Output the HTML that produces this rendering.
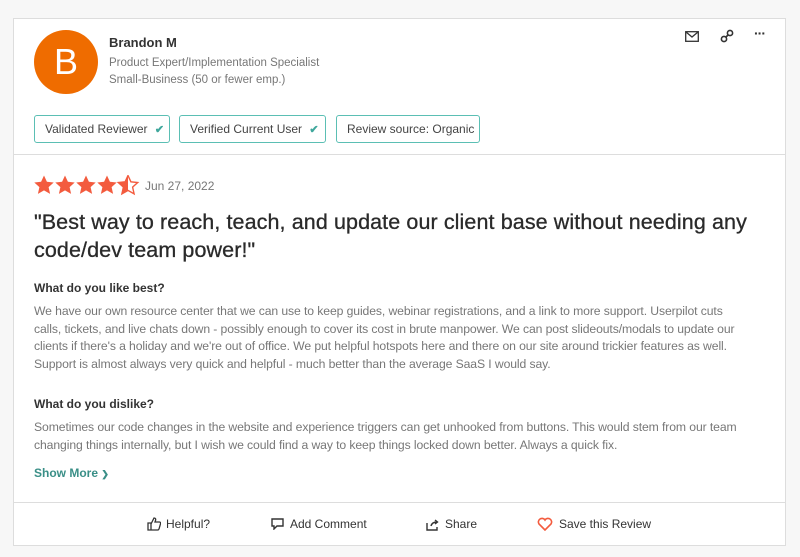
<!DOCTYPE html>
<html><head><style>
body{margin:0;background:#f7f7f7;font-family:"Liberation Sans",sans-serif;width:800px;height:557px;overflow:hidden;position:relative}
.card{position:absolute;left:13px;top:18px;width:773px;height:528px;background:#fff;border:1px solid #ddd;box-sizing:border-box}
.a{position:absolute;white-space:nowrap}
.av{left:20px;top:11px;width:64px;height:64px;border-radius:50%;background:#ef6c00;color:#fff;font-size:36px;text-align:center;line-height:64px}
.badge{position:absolute;top:96px;height:28px;border:1px solid #5bbfb4;border-radius:3px;box-sizing:border-box;font-size:12px;color:#444;line-height:26px;padding-left:10px}
.ck{color:#3fa79c;font-weight:bold;font-size:11px;margin-left:4px}
.hr{position:absolute;left:0;right:0;height:1px;background:#ddd}
.body{font-size:12.2px;color:#777;line-height:17.7px;left:20px;letter-spacing:-0.1px}
.h{font-size:12px;color:#333;font-weight:bold;left:20px}
.ft{font-size:12px;color:#333;top:498px}
</style></head><body>
<div class="card">
<div class="a av">B</div>
<div class="a" style="left:95px;top:16px;font-size:13px;color:#333;font-weight:bold">Brandon M</div>
<div class="a" style="left:95px;top:38px;font-size:11.5px;color:#777">Product Expert/Implementation Specialist</div>
<div class="a" style="left:95px;top:55px;font-size:11.5px;color:#777">Small-Business (50 or fewer emp.)</div>
<svg class="a" style="left:671px;top:12px" width="14" height="11" viewBox="0 0 14 11"><rect x="0.7" y="0.7" width="12.6" height="9.6" fill="none" stroke="#333" stroke-width="1.3"/><path d="M1 1l6 5 6-5" fill="none" stroke="#333" stroke-width="1.3"/></svg>
<svg class="a" style="left:706px;top:10px" width="14" height="14" viewBox="0 0 14 14"><circle cx="4" cy="10" r="2.6" fill="none" stroke="#333" stroke-width="1.6"/><circle cx="10" cy="4" r="2.6" fill="none" stroke="#333" stroke-width="1.6"/><path d="M5.5 8.5l3-3" stroke="#333" stroke-width="1.6"/></svg>
<div class="a" style="left:740px;top:6px;font-size:14px;color:#333;font-weight:bold;letter-spacing:-1px">···</div>
<div class="badge" style="left:20px;width:136px">Validated Reviewer <span class="ck">✔</span></div>
<div class="badge" style="left:165px;width:147px">Verified Current User <span class="ck">✔</span></div>
<div class="badge" style="left:322px;width:144px">Review source: Organic</div>
<div class="hr" style="top:135px"></div>
<svg class="a" style="left:20px;top:156px" width="108" height="21" viewBox="0 0 108 21">
<path id="s" d="M10 0.5l2.9 6.3 6.8.7-5.1 4.6 1.5 6.8L10 15.4 3.9 18.9l1.5-6.8L.3 7.5l6.8-.7z" fill="#f35b3e"/>
<path d="M10 0.5l2.9 6.3 6.8.7-5.1 4.6 1.5 6.8L10 15.4 3.9 18.9l1.5-6.8L.3 7.5l6.8-.7z" fill="#f35b3e" transform="translate(21 0)"/>
<path d="M10 0.5l2.9 6.3 6.8.7-5.1 4.6 1.5 6.8L10 15.4 3.9 18.9l1.5-6.8L.3 7.5l6.8-.7z" fill="#f35b3e" transform="translate(42 0)"/>
<path d="M10 0.5l2.9 6.3 6.8.7-5.1 4.6 1.5 6.8L10 15.4 3.9 18.9l1.5-6.8L.3 7.5l6.8-.7z" fill="#f35b3e" transform="translate(63 0)"/>
<g transform="translate(84 0)">
<path d="M10 0.5l2.9 6.3 6.8.7-5.1 4.6 1.5 6.8L10 15.4 3.9 18.9l1.5-6.8L.3 7.5l6.8-.7z" fill="none" stroke="#f35b3e" stroke-width="1.4"/>
<path d="M10 0.5L10 15.4 3.9 18.9l1.5-6.8L.3 7.5l6.8-.7z" fill="#f35b3e"/>
</g>
</svg>
<div class="a" style="left:131px;top:160px;font-size:12px;color:#777">Jun 27, 2022</div>
<div class="a" style="left:20px;top:189px;font-size:21.5px;color:#2a2a2a;line-height:28px;letter-spacing:0.1px;-webkit-text-stroke:0.3px #2a2a2a">"Best way to reach, teach, and update our client base without needing any<br>code/dev team power!"</div>
<div class="a h" style="top:262px">What do you like best?</div>
<div class="a body" style="top:284px">We have our own resource center that we can use to keep guides, webinar registrations, and a link to more support. Userpilot cuts<br>calls, tickets, and live chats down - possibly enough to cover its cost in brute manpower. We can post slideouts/modals to update our<br>clients if there's a holiday and we're out of office. We put helpful hotspots here and there on our site around trickier features as well.<br>Support is almost always very quick and helpful - much better than the average SaaS I would say.</div>
<div class="a h" style="top:378px">What do you dislike?</div>
<div class="a body" style="top:400px">Sometimes our code changes in the website and experience triggers can get unhooked from buttons. This would stem from our team<br>changing things internally, but I wish we could find a way to keep things locked down better. Always a quick fix.</div>
<div class="a" style="left:20px;top:447px;font-size:12px;color:#3a8f87;font-weight:bold">Show More <span style="font-size:9px">❯</span></div>
<div class="hr" style="top:483px"></div>
<svg class="a" style="left:133px;top:498px" width="14" height="14" viewBox="0 0 14 14"><path d="M1 6h3v7H1zM4 7l3-6c1.5 0 2 1 1.5 2.5L8 5h4.5c1 0 1.3 1 1 1.8L12 12c-.3.7-.8 1-1.5 1H4" fill="none" stroke="#333" stroke-width="1.3"/></svg>
<div class="a ft" style="left:152px">Helpful?</div>
<svg class="a" style="left:257px;top:499px" width="13" height="12" viewBox="0 0 13 12"><path d="M1 1h11v7H6l-3 3V8H1z" fill="none" stroke="#333" stroke-width="1.4"/></svg>
<div class="a ft" style="left:276px">Add Comment</div>
<svg class="a" style="left:412px;top:500px" width="13" height="12" viewBox="0 0 13 12"><path d="M1 4v7h10V8M5 7q1-4 6-4M9 1l2.5 2L9 5" fill="none" stroke="#333" stroke-width="1.4"/></svg>
<div class="a ft" style="left:431px">Share</div>
<svg class="a" style="left:523px;top:498px" width="16" height="14" viewBox="0 0 16 14"><path d="M8 13L2 7a3.3 3.3 0 016-4 3.3 3.3 0 016 4z" fill="none" stroke="#f35b3e" stroke-width="1.6"/></svg>
<div class="a ft" style="left:545px">Save this Review</div>
</div>
</body></html>
